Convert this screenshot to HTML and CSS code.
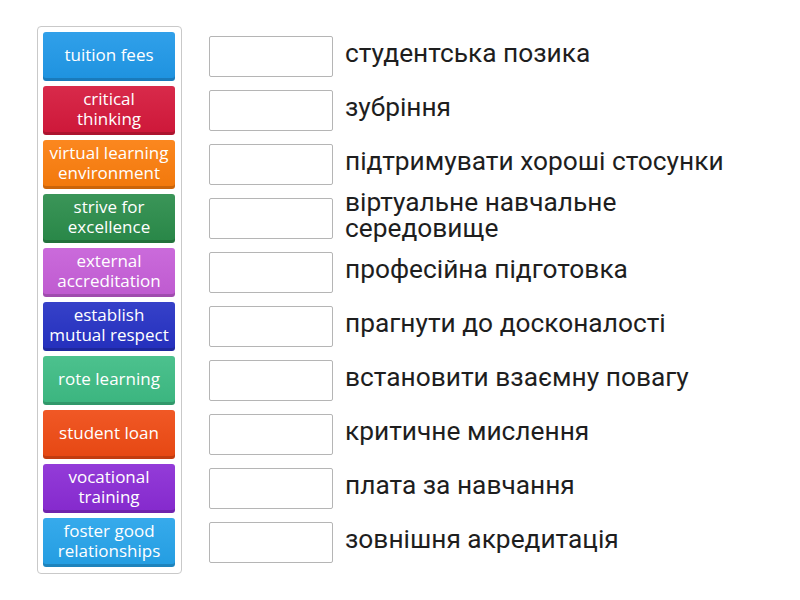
FILE: index.html
```html
<!DOCTYPE html>
<html lang="uk">
<head>
<meta charset="utf-8">
<title>Match up</title>
<link rel="stylesheet" href="styles.css">
</head>
<body>
<div class="page">
  <div class="bank">
    <div class="tile c1">tuition fees</div>
    <div class="tile c2">critical<br>thinking</div>
    <div class="tile c3">virtual learning<br>environment</div>
    <div class="tile c4">strive for<br>excellence</div>
    <div class="tile c5">external<br>accreditation</div>
    <div class="tile c6">establish<br>mutual respect</div>
    <div class="tile c7">rote learning</div>
    <div class="tile c8">student loan</div>
    <div class="tile c9">vocational<br>training</div>
    <div class="tile c10">foster good<br>relationships</div>
  </div>
  <div class="targets">
    <div class="row"><div class="slot"></div><div class="label">студентська позика</div></div>
    <div class="row"><div class="slot"></div><div class="label">зубріння</div></div>
    <div class="row"><div class="slot"></div><div class="label">підтримувати хороші стосунки</div></div>
    <div class="row"><div class="slot"></div><div class="label">віртуальне навчальне середовище</div></div>
    <div class="row"><div class="slot"></div><div class="label">професійна підготовка</div></div>
    <div class="row"><div class="slot"></div><div class="label">прагнути до досконалості</div></div>
    <div class="row"><div class="slot"></div><div class="label">встановити взаємну повагу</div></div>
    <div class="row"><div class="slot"></div><div class="label">критичне мислення</div></div>
    <div class="row"><div class="slot"></div><div class="label">плата за навчання</div></div>
    <div class="row"><div class="slot"></div><div class="label">зовнішня акредитація</div></div>
  </div>
</div>
</body>
</html>
```

FILE: styles.css
```css
html, body {
  margin: 0;
  padding: 0;
  background: #ffffff;
}

.page {
  display: flex;
  align-items: flex-start;
  padding: 26px 0 0 37px;
}

.bank {
  display: flex;
  flex-direction: column;
  gap: 5px;
  padding: 5px 6px 6px 5px;
  border: 1px solid #c9c9c9;
  border-radius: 4px;
}

.tile {
  width: 132px;
  height: 49px;
  box-sizing: border-box;
  display: flex;
  align-items: center;
  justify-content: center;
  text-align: center;
  color: #ffffff;
  font-family: "Open Sans", "Lato", sans-serif;
  font-size: 17px;
  line-height: 20px;
  border-radius: 3px;
  padding-bottom: 4px;
  background-image: linear-gradient(rgba(255, 255, 255, 0.08), rgba(0, 0, 0, 0.04));
  box-shadow: inset 0 -3px 0 rgba(0, 0, 0, 0.16);
}

.c1 { background-color: #1f98e8; }
.c2 { background-color: #d5183b; }
.c3 { background-color: #fb7d0c; }
.c4 { background-color: #2a8c4a; }
.c5 { background-color: #c65ed8; }
.c6 { background-color: #2531c4; }
.c7 { background-color: #3dbc84; }
.c8 { background-color: #ef4a13; }
.c9 { background-color: #8a2bd5; }
.c10 { background-color: #25a3ea; }

.targets {
  display: flex;
  flex-direction: column;
  gap: 5px;
  margin-left: 27px;
  padding-top: 6px;
}

.row {
  height: 49px;
  display: flex;
  align-items: center;
}

.slot {
  width: 124px;
  height: 41px;
  box-sizing: border-box;
  border: 1px solid #b5b5b5;
  border-radius: 2px;
  flex: none;
}

.label {
  margin-left: 12px;
  margin-bottom: 7px;
  width: 420px;
  font-family: "Roboto", "Liberation Sans", sans-serif;
  font-size: 26.3px;
  line-height: 26px;
  color: #1e1e1e;
}
```
